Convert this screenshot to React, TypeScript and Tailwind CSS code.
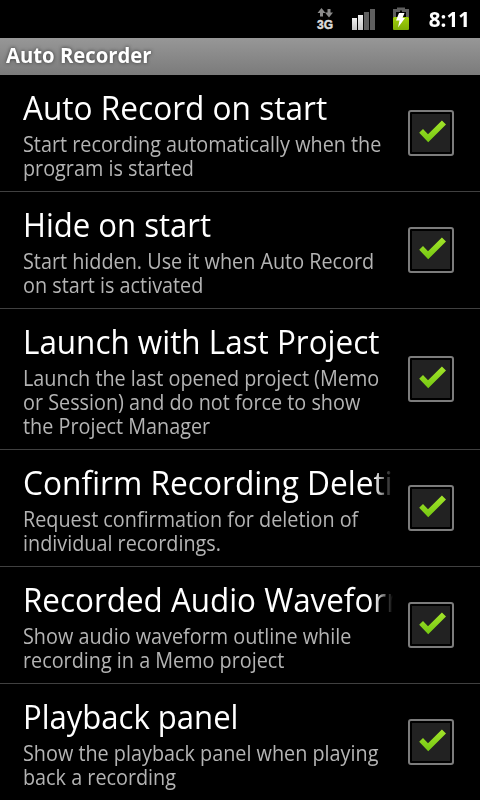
type Preference = {
  title: string;
  titleScale: string;
  summary: string[];
  faded?: boolean;
};

const preferences: Preference[] = [
  {
    title: "Auto Record on start",
    titleScale: "scale-x-[0.957]",
    summary: ["Start recording automatically when the", "program is started"],
  },
  {
    title: "Hide on start",
    titleScale: "scale-x-[0.942]",
    summary: ["Start hidden. Use it when Auto Record", "on start is activated"],
  },
  {
    title: "Launch with Last Project",
    titleScale: "scale-x-[0.952]",
    summary: [
      "Launch the last opened project (Memo",
      "or Session) and do not force to show",
      "the Project Manager",
    ],
  },
  {
    title: "Confirm Recording Deletion",
    titleScale: "scale-x-[0.959]",
    summary: ["Request confirmation for deletion of", "individual recordings."],
    faded: true,
  },
  {
    title: "Recorded Audio Waveform",
    titleScale: "scale-x-[0.951]",
    summary: ["Show audio waveform outline while", "recording in a Memo project"],
    faded: true,
  },
  {
    title: "Playback panel",
    titleScale: "scale-x-[0.941]",
    summary: ["Show the playback panel when playing", "back a recording"],
  },
];

const StatusBar: React.FC = () => {
  return (
    <div className="relative h-[38px] shrink-0 bg-black">
      <svg width="480" height="38" viewBox="0 0 480 38" className="block">
        <defs>
          <linearGradient id="bars" x1="0" y1="0" x2="0" y2="1">
            <stop offset="0" stopColor="#f0f0f0" />
            <stop offset="1" stopColor="#c4c4c4" />
          </linearGradient>
          <linearGradient id="charge" x1="0" y1="0" x2="0" y2="1">
            <stop offset="0" stopColor="#a2d10c" />
            <stop offset="1" stopColor="#7fae05" />
          </linearGradient>
        </defs>

        {/* data arrows */}
        <path d="M321.500 8l4 5h-2.500V16.500h-3V13h-2.500z" fill="#8a8a8a" />
        <path d="M329 17.500l-4-5h2.500V9h3v3.500h2.500z" fill="#8a8a8a" />
        <text
          x="317"
          y="29"
          textLength="16"
          lengthAdjust="spacingAndGlyphs"
          fill="#dcdcdc"
          stroke="#dcdcdc"
          strokeWidth="0.5"
          className="font-['Liberation_Sans'] text-[13px] font-bold"
        >
          3G
        </text>

        {/* signal */}
        <rect x="352" y="18" width="5" height="12" fill="url(#bars)" />
        <rect x="358" y="15" width="5" height="15" fill="url(#bars)" />
        <rect x="364" y="12" width="5" height="18" fill="#5f5f5f" />
        <rect x="370" y="9" width="5" height="21" fill="#5f5f5f" />

        {/* battery */}
        <path
          d="M394.500 17v-6.500h4V9h5v1.500h4V17"
          fill="none"
          stroke="#5e5e5e"
          strokeWidth="3"
        />
        <rect x="393" y="17" width="16" height="13" rx="1" fill="url(#charge)" />
        <path d="M399 13h5.500l-2 5h2.500l-7 9.500 1.500-7h-3.500z" fill="#fff" />
      </svg>
      <span className="absolute right-[10px] top-[5px] origin-right scale-x-[0.98] text-[21px] font-bold leading-[28px] text-white">
        8:11
      </span>
    </div>
  );
};

const CheckBox: React.FC = () => {
  return (
    <svg width="46" height="46" viewBox="0 0 46 46" className="shrink-0">
      <defs>
        <linearGradient id="tick" x1="0" y1="0" x2="0" y2="1">
          <stop offset="0" stopColor="#a4e52a" />
          <stop offset="1" stopColor="#74c712" />
        </linearGradient>
      </defs>
      <rect
        x="1"
        y="1"
        width="44"
        height="44"
        rx="2"
        fill="#000"
        stroke="#7c7c7c"
        strokeWidth="2"
      />
      <rect x="4" y="4" width="38" height="38" fill="#222" />
      <path
        d="M11.200 22.800l3.800-3.800 5 5.200L33.900 10.500l4.100 4L20.200 32.300z"
        fill="url(#tick)"
      />
    </svg>
  );
};

const PreferenceRow: React.FC<{ item: Preference }> = ({ item }) => {
  return (
    <div className="flex shrink-0 items-center justify-between border-b border-[#404040] pl-[23px] pr-[26px]">
      <div className="w-[370px] shrink-0 pb-[11px] pt-[13px]">
        <div
          className={
            item.faded
              ? "overflow-hidden [mask-image:linear-gradient(to_right,#000_351px,transparent_370px)]"
              : ""
          }
        >
          <div
            className={`origin-left whitespace-nowrap pb-[5px] text-[33px] leading-[39px] text-white ${item.titleScale}`}
          >
            {item.title}
          </div>
        </div>
        <div className="text-[21px] leading-[24px] text-[#b4b4b4]">
          {item.summary.map((line) => (
            <div key={line} className="origin-left scale-x-[0.943] whitespace-nowrap">
              {line}
            </div>
          ))}
        </div>
      </div>
      <div className="-ml-4 flex">
        <CheckBox />
      </div>
    </div>
  );
};

const App: React.FC = () => {
  return (
    <div className="flex h-[800px] w-[480px] flex-col overflow-hidden bg-black font-['Open_Sans','Noto_Sans',sans-serif]">
      <StatusBar />
      <div className="flex h-[37px] shrink-0 items-center bg-linear-to-b from-[#979797] to-[#7b7b7b] pb-[4px] pl-[6px]">
        <span className="origin-left scale-x-[0.965] text-[21px] font-bold leading-[28px] text-white [text-shadow:0_0_4px_#333]">
          Auto Recorder
        </span>
      </div>
      {preferences.map((item) => (
        <PreferenceRow key={item.title} item={item} />
      ))}
    </div>
  );
};

export default App;
